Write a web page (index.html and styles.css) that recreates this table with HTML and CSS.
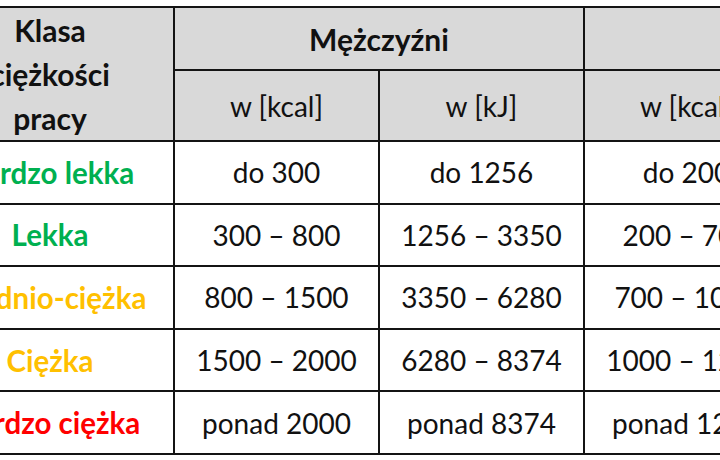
FILE: index.html
```html
<!DOCTYPE html>
<html lang="pl">
<head>
<meta charset="utf-8">
<title>Klasa ciężkości pracy</title>
<link rel="stylesheet" href="styles.css">
</head>
<body>
<div class="frame">
<table class="energy">
  <colgroup>
    <col class="c-class">
    <col class="c-val"><col class="c-val"><col class="c-val"><col class="c-val">
  </colgroup>
  <thead>
    <tr class="h1">
      <th rowspan="2" class="klasa">Klasa<br>ciężkości<br>pracy</th>
      <th colspan="2" class="group">Mężczyźni</th>
      <th colspan="2" class="group">Kobiety</th>
    </tr>
    <tr class="h2">
      <th class="unit">w [kcal]</th>
      <th class="unit">w [kJ]</th>
      <th class="unit">w [kcal]</th>
      <th class="unit">w [kJ]</th>
    </tr>
  </thead>
  <tbody>
    <tr><th class="lvl green">Bardzo lekka</th><td>do 300</td><td>do 1256</td><td>do 200</td><td>do 837</td></tr>
    <tr><th class="lvl green">Lekka</th><td>300 – 800</td><td>1256 – 3350</td><td>200 – 700</td><td>837 – 2930</td></tr>
    <tr><th class="lvl amber">Średnio-ciężka</th><td>800 – 1500</td><td>3350 – 6280</td><td>700 – 1000</td><td>2930 – 4186</td></tr>
    <tr><th class="lvl amber">Ciężka</th><td>1500 – 2000</td><td>6280 – 8374</td><td>1000 – 1200</td><td>4186 – 5024</td></tr>
    <tr><th class="lvl red">Bardzo ciężka</th><td>ponad 2000</td><td>ponad 8374</td><td>ponad 1200</td><td>ponad 5024</td></tr>
  </tbody>
</table>
</div>
</body>
</html>
```
FILE: styles.css
```css
html, body {
  margin: 0;
  padding: 0;
  background: #ffffff;
}
.frame {
  width: 720px;
  height: 460px;
  overflow: hidden;
  padding-top: 6px;
  box-sizing: border-box;
}
.energy {
  margin-left: -75px;
  border-collapse: collapse;
  table-layout: fixed;
  width: 1068px;
  font-family: Lato, "Liberation Sans", sans-serif;
  font-size: 28px;
  color: #111111;
}
.c-class { width: 248px; }
.c-val { width: 205px; }
.energy th,
.energy td {
  border: 2px solid #141414;
  padding: 0;
  text-align: center;
  vertical-align: middle;
}
.energy thead th {
  background: #d9d9d9;
}
.h1 { height: 63px; }
.h2 { height: 70px; }
.energy tbody tr { height: 62.6px; }
.klasa {
  font-size: 30px;
  font-weight: 700;
  line-height: 44px;
  padding-top: 4px;
}
.group {
  font-size: 30px;
  font-weight: 700;
}
.unit {
  font-weight: 400;
}
.lvl {
  font-size: 29.5px;
  font-weight: 700;
}
.energy td {
  font-weight: 400;
  background: #ffffff;
}
.green { color: #00b050; }
.amber { color: #ffc000; }
.red { color: #ff0000; }
```
